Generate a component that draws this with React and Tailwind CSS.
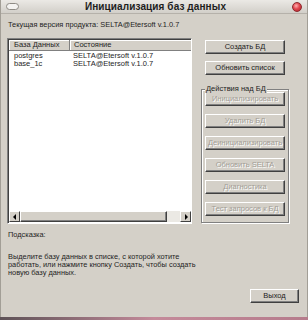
import React from "react";

const font = { fontFamily: '"Liberation Sans", Arial, sans-serif' };

function Btn({ children, disabled, className = "" }) {
  return (
    <div
      className={`flex items-center justify-center h-[14px] bg-[#d4d0c8] border border-t-white border-l-white border-r-[#404040] border-b-[#404040] shadow-[inset_-1px_-1px_0_#808080] text-[7.5px] leading-none whitespace-nowrap ${
        disabled ? "text-[#a29e96] [text-shadow:1px_1px_0_#ffffff]" : "text-[#1c1c1c]"
      } ${className}`}
    >
      {children}
    </div>
  );
}

function Arrow({ dir }) {
  return (
    <div className="w-[11px] h-[11px] flex items-center justify-center bg-[#d4d0c8] border border-t-white border-l-white border-r-[#404040] border-b-[#404040]">
      <svg width="4" height="6" viewBox="0 0 4 6">
        {dir === "left" ? (
          <path d="M3 0 L0 3 L3 6 Z" fill="#000" />
        ) : (
          <path d="M1 0 L4 3 L1 6 Z" fill="#000" />
        )}
      </svg>
    </div>
  );
}

export default function App() {
  return (
    <div className="w-[308px] h-[320px] flex flex-col overflow-hidden bg-[#b9868f]" style={font}>
      <div className="h-[317px] flex flex-col bg-[#d4d0c8] border-l border-r border-[#a29e96]">
        {/* Title bar */}
        <div className="h-[14px] flex items-center bg-linear-to-b from-[#ebe9e5] to-[#d2cfc9] border-b border-[#b5b1aa] px-[5px]">
          <div className="w-[13px] h-[7px] rounded-full border border-[#8e8b85] bg-[#f4f3f1]" />
          <div className="flex-1 text-center text-[10px] font-bold leading-none text-[#1e1e1e] tracking-[0.1px]">
            Инициализация баз данных
          </div>
          <div className="w-[10px] h-[10px] rounded-full bg-[radial-gradient(circle_at_40%_35%,#ffb0b0_0%,#e2474f_45%,#a81e26_100%)] border border-[#8c2a2e]" />
        </div>

        {/* Body */}
        <div className="flex-1 flex flex-col pl-[6px] pr-[8px] text-[#1e1e1e]">
          <div className="mt-[7px] pl-[1px] text-[7.4px] leading-[8px] whitespace-nowrap">
            Текущая версия продукта: SELTA@Etersoft v.1.0.7
          </div>

          <div className="mt-[9px] flex">
            {/* List */}
            <div className="w-[185px] h-[186px] flex flex-col bg-white border border-t-[#808080] border-l-[#808080] border-r-white border-b-white shadow-[inset_1px_1px_0_#404040]">
              <div className="ml-[1px] mt-[1px] h-[11px] flex text-[7.5px] leading-none">
                <div className="w-[61px] flex items-center pl-[5px] bg-[#d4d0c8] border-r border-b border-r-[#808080] border-b-[#808080] shadow-[inset_1px_1px_0_#fff]">
                  База Данных
                </div>
                <div className="flex-1 flex items-center pl-[4px] bg-[#d4d0c8] border-b border-b-[#808080] shadow-[inset_1px_1px_0_#fff]">
                  Состояние
                </div>
              </div>
              <div className="mt-[1px] flex flex-col text-[7.5px] leading-[8px]">
                <div className="flex">
                  <div className="w-[61px] pl-[6px]">postgres</div>
                  <div className="pl-[4px]">SELTA@Etersoft v.1.0.7</div>
                </div>
                <div className="flex">
                  <div className="w-[61px] pl-[6px]">base_1c</div>
                  <div className="pl-[4px]">SELTA@Etersoft v.1.0.7</div>
                </div>
              </div>
              <div className="flex-1" />
              <div className="ml-[1px] mb-[1px] h-[11px] flex">
                <Arrow dir="left" />
                <div className="w-[147px] h-[11px] bg-[#d4d0c8] border border-t-white border-l-white border-r-[#404040] border-b-[#404040] shadow-[inset_-1px_-1px_0_#808080]" />
                <div className="flex-1 bg-[#ebe9e4]" />
                <Arrow dir="right" />
              </div>
            </div>

            {/* Right column */}
            <div className="ml-[9px] w-[88px] flex flex-col">
              <div className="pl-[4px] pt-[2px] flex flex-col gap-[7px]">
                <Btn className="w-[80px]">Создать БД</Btn>
                <Btn className="w-[80px]">Обновить список</Btn>
              </div>
              <div className="relative mt-[14px] w-[88px] border border-[#808080] shadow-[inset_1px_1px_0_#fff,1px_1px_0_#fff] px-[3px] pt-[2px] pb-[6px] flex flex-col gap-[8px]">
                <span className="absolute left-[3px] top-[-5px] px-[1px] bg-[#d4d0c8] text-[7.5px] leading-[8px] whitespace-nowrap text-[#1e1e1e]">
                  Действия над БД
                </span>
                <Btn disabled className="w-[80px]">Инициализировать</Btn>
                <Btn disabled className="w-[80px]">Удалить БД</Btn>
                <Btn disabled className="w-[80px]">Деинициализировать</Btn>
                <Btn disabled className="w-[80px]">Обновить SELTA</Btn>
                <Btn disabled className="w-[80px]">Диагностика</Btn>
                <Btn disabled className="w-[80px]">Тест запросов к БД</Btn>
              </div>
            </div>
          </div>

          <div className="mt-[7px] pl-[1px] text-[7.4px] leading-[8px]">Подсказка:</div>
          <div className="mt-[14px] pl-[1px] text-[7.4px] leading-[8px] whitespace-nowrap">
            <div>Выделите базу данных в списке, с которой хотите</div>
            <div>работать, или нажмите кнопку Создать, чтобы создать</div>
            <div>новую базу данных.</div>
          </div>

          <div className="mt-[12px] flex justify-end">
            <Btn className="w-[49px]">Выход</Btn>
          </div>
        </div>
      </div>
      <div className="h-[3px] bg-linear-to-r from-[#5e5257] via-[#c48a9a] to-[#b67c8c]" />
    </div>
  );
}
